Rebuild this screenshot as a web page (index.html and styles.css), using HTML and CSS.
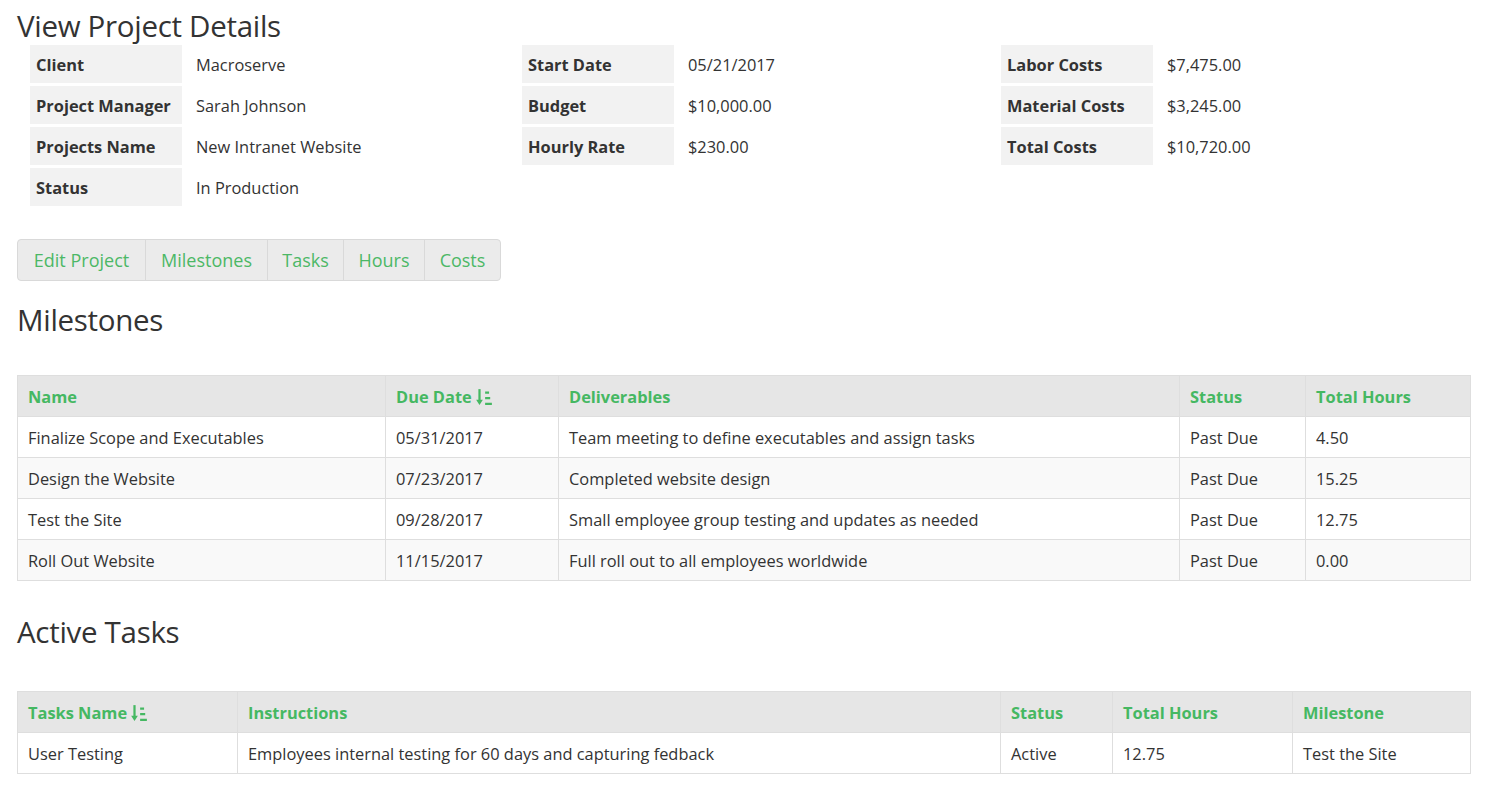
FILE: index.html
```html
<!DOCTYPE html>
<html>
<head>
<meta charset="utf-8">
<link rel="stylesheet" href="styles.css">
</head>
<body>
<div class="page">
  <h1 class="title">View Project Details</h1>
  <div class="details">
    <table class="info info-1">
      <tr><th>Client</th><td>Macroserve</td></tr>
      <tr><th>Project Manager</th><td>Sarah Johnson</td></tr>
      <tr><th>Projects Name</th><td>New Intranet Website</td></tr>
      <tr><th>Status</th><td>In Production</td></tr>
    </table>
    <table class="info info-2">
      <tr><th>Start Date</th><td>05/21/2017</td></tr>
      <tr><th>Budget</th><td>$10,000.00</td></tr>
      <tr><th>Hourly Rate</th><td>$230.00</td></tr>
    </table>
    <table class="info info-3">
      <tr><th>Labor Costs</th><td>$7,475.00</td></tr>
      <tr><th>Material Costs</th><td>$3,245.00</td></tr>
      <tr><th>Total Costs</th><td>$10,720.00</td></tr>
    </table>
  </div>

  <div class="btn-group">
    <a class="btn b1">Edit Project</a><a class="btn b2">Milestones</a><a class="btn b3">Tasks</a><a class="btn b4">Hours</a><a class="btn b5">Costs</a>
  </div>

  <h2 class="section">Milestones</h2>
  <table class="grid milestones">
    <colgroup><col class="m1"><col class="m2"><col class="m3"><col class="m4"><col></colgroup>
    <thead>
      <tr><th>Name</th><th>Due Date <svg class="sort" viewBox="0 0 14 16"><path d="M3 1v11.5" /><path d="M0 10.5l3 4.5 3-4.5z" class="fill"/><path d="M8 4h3.5M8 9h4.5M8 14h6"/></svg></th><th>Deliverables</th><th>Status</th><th>Total Hours</th></tr>
    </thead>
    <tbody>
      <tr><td>Finalize Scope and Executables</td><td>05/31/2017</td><td>Team meeting to define executables and assign tasks</td><td>Past Due</td><td>4.50</td></tr>
      <tr><td>Design the Website</td><td>07/23/2017</td><td>Completed website design</td><td>Past Due</td><td>15.25</td></tr>
      <tr><td>Test the Site</td><td>09/28/2017</td><td>Small employee group testing and updates as needed</td><td>Past Due</td><td>12.75</td></tr>
      <tr><td>Roll Out Website</td><td>11/15/2017</td><td>Full roll out to all employees worldwide</td><td>Past Due</td><td>0.00</td></tr>
    </tbody>
  </table>

  <h2 class="section">Active Tasks</h2>
  <table class="grid tasks">
    <colgroup><col class="t1"><col class="t2"><col class="t3"><col class="t4"><col></colgroup>
    <thead>
      <tr><th>Tasks Name <svg class="sort" viewBox="0 0 14 16"><path d="M3 1v11.5" /><path d="M0 10.5l3 4.5 3-4.5z" class="fill"/><path d="M8 4h3.5M8 9h4.5M8 14h6"/></svg></th><th>Instructions</th><th>Status</th><th>Total Hours</th><th>Milestone</th></tr>
    </thead>
    <tbody>
      <tr><td>User Testing</td><td>Employees internal testing for 60 days and capturing fedback</td><td>Active</td><td>12.75</td><td>Test the Site</td></tr>
    </tbody>
  </table>
</div>
</body>
</html>
```

FILE: styles.css
```css
* { box-sizing: border-box; }
html, body { margin: 0; padding: 0; background: #fff; }
body {
  font-family: "Open Sans", "Noto Sans", sans-serif;
  font-size: 16.4px;
  color: #333;
}
.page { padding: 0 29px 0 17px; }
.title {
  font-weight: 400;
  font-size: 29.5px;
  margin: 0;
  padding-top: 9px;
  line-height: 33px;
  letter-spacing: -0.3px;
}
.details {
  display: grid;
  grid-template-columns: 492px 479px auto;
  padding-left: 11px;
  height: 197px;
}
.info { border-collapse: separate; border-spacing: 2px 3px; align-self: start; }
.info th {
  background: #f2f2f2;
  text-align: left;
  font-weight: 700;
  width: 152px;
  height: 38px;
  padding: 0 6px;
  white-space: nowrap;
}
.info td { padding: 0 12px; height: 38px; white-space: nowrap; }

.btn-group {
  display: inline-flex;
  border: 1px solid #d9d9d9;
  border-radius: 4px;
  background: #ebebeb;
  height: 42px;
  overflow: hidden;
}
.btn {
  color: #4cb866;
  font-size: 18px;
  display: flex;
  align-items: center;
  justify-content: center;
  border-left: 1px solid #d9d9d9;
}
.btn:first-child { border-left: 0; }
.b1 { width: 127px; }
.b2 { width: 122px; }
.b3 { width: 76px; }
.b4 { width: 81px; }
.b5 { width: 76px; }

.section {
  font-weight: 400;
  font-size: 29.5px;
  margin: 0;
  line-height: 38px;
  padding-top: 20px;
  letter-spacing: -0.3px;
}
.grid {
  width: 100%;
  border-collapse: collapse;
  table-layout: fixed;
  margin-top: 36px;
}
.grid th, .grid td {
  border: 1px solid #dedede;
  height: 41px;
  padding: 0 10px;
  text-align: left;
  white-space: nowrap;
}
.grid th { background: #e6e6e6; color: #45b862; font-weight: 700; }
.grid tbody tr:nth-child(even) td { background: #f9f9f9; }
.grid tbody tr:nth-child(odd) td { background: #fff; }
.milestones { margin-bottom: 12px; }
.tasks { margin-top: 40px; }
.m1 { width: 368px; } .m2 { width: 173px; } .m3 { width: 621px; } .m4 { width: 126px; }
.t1 { width: 220px; } .t2 { width: 763px; } .t3 { width: 112px; } .t4 { width: 180px; }
.sort { width: 16px; height: 18px; vertical-align: -3px; stroke: #45b862; stroke-width: 2; fill: none; }
.sort .fill { fill: #45b862; stroke: none; }
```
